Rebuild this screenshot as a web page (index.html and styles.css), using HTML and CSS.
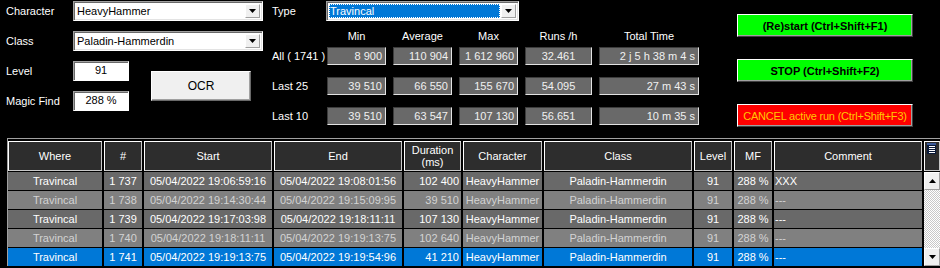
FILE: index.html
```html
<!DOCTYPE html>
<html lang="en">
<head>
  <meta charset="UTF-8" />
  <title>Run Tracker</title>
  <link rel="stylesheet" href="styles.css">
</head>
<body>
  <div class="top">
    <!-- Character setup -->
    <div class="setup">
      <span class="lbl">Character</span>
      <div class="combo wide">
        <span class="combo-text">HeavyHammer</span>
        <span class="combo-btn"><svg width="7" height="4" viewBox="0 0 7 4"><polygon points="0,0 7,0 3.5,4" fill="#000"/></svg></span>
      </div>
      <span class="lbl">Class</span>
      <div class="combo wide">
        <span class="combo-text">Paladin-Hammerdin</span>
        <span class="combo-btn"><svg width="7" height="4" viewBox="0 0 7 4"><polygon points="0,0 7,0 3.5,4" fill="#000"/></svg></span>
      </div>
      <span class="lbl">Level</span>
      <div class="field">91</div>
      <button class="ocr">OCR</button>
      <span class="lbl">Magic Find</span>
      <div class="field">288 %</div>
    </div>

    <!-- Stats -->
    <div class="stats">
      <div class="type-row">
        <span class="lbl type-lbl">Type</span>
        <div class="combo type">
          <span class="combo-text selected">Travincal</span>
          <span class="combo-btn"><svg width="7" height="4" viewBox="0 0 7 4"><polygon points="0,0 7,0 3.5,4" fill="#000"/></svg></span>
        </div>
      </div>
      <div class="stat-head">
        <span></span>
        <span>Min</span>
        <span>Average</span>
        <span>Max</span>
        <span>Runs /h</span>
        <span>Total Time</span>
      </div>
      <div class="stat-row">
        <span class="lbl">All ( 1741 )</span>
        <span class="val">8 900</span>
        <span class="val">110 904</span>
        <span class="val">1 612 960</span>
        <span class="val center">32.461</span>
        <span class="val">2 j 5 h 38 m 4 s</span>
      </div>
      <div class="stat-row">
        <span class="lbl">Last 25</span>
        <span class="val">39 510</span>
        <span class="val">66 550</span>
        <span class="val">155 670</span>
        <span class="val center">54.095</span>
        <span class="val">27 m 43 s</span>
      </div>
      <div class="stat-row">
        <span class="lbl">Last 10</span>
        <span class="val">39 510</span>
        <span class="val">63 547</span>
        <span class="val">107 130</span>
        <span class="val center">56.651</span>
        <span class="val">10 m 35 s</span>
      </div>
    </div>

    <!-- Actions -->
    <div class="actions">
      <button class="act go">(Re)start (Ctrl+Shift+F1)</button>
      <button class="act go">STOP (Ctrl+Shift+F2)</button>
      <button class="act cancel">CANCEL active run (Ctrl+Shift+F3)</button>
    </div>
  </div>

  <!-- Runs grid -->
  <div class="runs">
    <div class="th">Where</div>
    <div class="th">#</div>
    <div class="th">Start</div>
    <div class="th">End</div>
    <div class="th">Duration<br>(ms)</div>
    <div class="th">Character</div>
    <div class="th">Class</div>
    <div class="th">Level</div>
    <div class="th">MF</div>
    <div class="th">Comment</div>
    <div class="th corner">
      <svg width="9" height="11" viewBox="0 0 9 11">
        <rect x="0" y="0" width="9" height="11" fill="#0a1a3a"/>
        <rect x="0" y="0" width="9" height="2" fill="#3a5a9a"/>
        <rect x="2" y="3" width="6" height="1" fill="#fff"/>
        <rect x="2" y="5" width="6" height="1" fill="#fff"/>
        <rect x="2" y="7" width="6" height="1" fill="#fff"/>
        <rect x="2" y="9" width="6" height="1" fill="#fff"/>
      </svg>
    </div>

    <div class="row odd">
      <div class="td">Travincal</div>
      <div class="td">1 737</div>
      <div class="td">05/04/2022 19:06:59:16</div>
      <div class="td">05/04/2022 19:08:01:56</div>
      <div class="td right">102 400</div>
      <div class="td">HeavyHammer</div>
      <div class="td">Paladin-Hammerdin</div>
      <div class="td">91</div>
      <div class="td">288 %</div>
      <div class="td left">XXX</div>
    </div>
    <div class="row even">
      <div class="td">Travincal</div>
      <div class="td">1 738</div>
      <div class="td">05/04/2022 19:14:30:44</div>
      <div class="td">05/04/2022 19:15:09:95</div>
      <div class="td right">39 510</div>
      <div class="td">HeavyHammer</div>
      <div class="td">Paladin-Hammerdin</div>
      <div class="td">91</div>
      <div class="td">288 %</div>
      <div class="td left">---</div>
    </div>
    <div class="row odd">
      <div class="td">Travincal</div>
      <div class="td">1 739</div>
      <div class="td">05/04/2022 19:17:03:98</div>
      <div class="td">05/04/2022 19:18:11:11</div>
      <div class="td right">107 130</div>
      <div class="td">HeavyHammer</div>
      <div class="td">Paladin-Hammerdin</div>
      <div class="td">91</div>
      <div class="td">288 %</div>
      <div class="td left">---</div>
    </div>
    <div class="row even">
      <div class="td">Travincal</div>
      <div class="td">1 740</div>
      <div class="td">05/04/2022 19:18:11:11</div>
      <div class="td">05/04/2022 19:19:13:75</div>
      <div class="td right">102 640</div>
      <div class="td">HeavyHammer</div>
      <div class="td">Paladin-Hammerdin</div>
      <div class="td">91</div>
      <div class="td">288 %</div>
      <div class="td left">---</div>
    </div>
    <div class="row sel">
      <div class="td">Travincal</div>
      <div class="td">1 741</div>
      <div class="td">05/04/2022 19:19:13:75</div>
      <div class="td">05/04/2022 19:19:54:96</div>
      <div class="td right">41 210</div>
      <div class="td">HeavyHammer</div>
      <div class="td">Paladin-Hammerdin</div>
      <div class="td">91</div>
      <div class="td">288 %</div>
      <div class="td left">---</div>
    </div>

    <div class="scroll">
      <span class="sb-btn"><svg width="7" height="4" viewBox="0 0 7 4"><polygon points="0,4 7,4 3.5,0" fill="#000"/></svg></span>
      <span class="sb-track"></span>
      <span class="sb-btn"><svg width="7" height="4" viewBox="0 0 7 4"><polygon points="0,0 7,0 3.5,4" fill="#000"/></svg></span>
    </div>
  </div>
</body>
</html>
```

FILE: styles.css
```css
/* ===============================
   BASE
   =============================== */
* {
  margin: 0;
  padding: 0;
  box-sizing: border-box;
}
body {
  font-family: "Liberation Sans", Arial, sans-serif;
  font-size: 11px;
  background: #000;
  color: #fff;
  width: 940px;
  height: 268px;
  overflow: hidden;
}
button {
  font-family: inherit;
  cursor: pointer;
  padding: 0;
  white-space: nowrap;
}
.lbl {
  white-space: nowrap;
}

.top {
  display: flex;
  height: 138px;
}

/* ===============================
   SETUP (left)
   =============================== */
.setup {
  display: grid;
  grid-template-columns: 67px 56px 22px 100px 12px;
  grid-template-rows: repeat(4, 20px);
  row-gap: 10px;
  align-content: start;
  align-items: center;
  padding: 1px 0 0 6px;
}
.setup .lbl {
  grid-column: 1;
}
.combo {
  display: flex;
  align-items: center;
  height: 20px;
  padding: 2px;
  background: #fff;
  color: #000;
  border: 1px solid;
  border-color: #a0a0a0 #fff #fff #a0a0a0;
  box-shadow: inset 1px 1px #696969, inset -1px -1px #e3e3e3;
}
.combo.wide {
  grid-column: 2 / 6;
}
.combo-text {
  flex: 1;
  height: 14px;
  line-height: 14px;
  padding-left: 1px;
  white-space: nowrap;
}
.combo-text.selected {
  background: #0078d7;
  color: #fff;
  outline: 1px dotted #fff;
  outline-offset: -1px;
}
.combo-btn {
  width: 15px;
  height: 14px;
  margin-left: 1px;
  display: flex;
  align-items: center;
  justify-content: center;
  background: #f0f0f0;
  border: 1px solid;
  border-color: #fff #a0a0a0 #a0a0a0 #fff;
}
.field {
  grid-column: 2;
  height: 20px;
  line-height: 17px;
  text-align: center;
  background: #fff;
  color: #000;
  border: 1px solid;
  border-color: #a0a0a0 #fff #fff #a0a0a0;
  box-shadow: inset 1px 1px #696969;
}
.ocr {
  grid-column: 4;
  grid-row: 3 / 5;
  align-self: center;
  height: 30px;
  font-size: 12px;
  color: #000;
  background: #f0f0f0;
  border: 1px solid;
  border-color: #fff #696969 #696969 #fff;
  box-shadow: inset -1px -1px #a0a0a0;
}

/* ===============================
   STATS (middle)
   =============================== */
.stats {
  margin-left: 9px;
  padding-top: 1px;
}
.type-row {
  display: flex;
  align-items: center;
}
.type-lbl {
  width: 54px;
}
.combo.type {
  width: 193px;
}
.stat-head,
.stat-row {
  display: grid;
  grid-template-columns: 48px 59px 59px 59px 67px 100px;
  column-gap: 7px;
  align-items: center;
}
.stat-head {
  height: 16px;
  margin-top: 7px;
  text-align: center;
}
.stat-row {
  height: 18px;
  margin-top: 12px;
}
.stat-head + .stat-row {
  margin-top: 3px;
}
.val {
  height: 18px;
  line-height: 16px;
  padding-right: 3px;
  text-align: right;
  white-space: nowrap;
  background: #696969;
  color: #f0f0f0;
  border: 1px solid;
  border-color: #3c3c3c #e3e3e3 #e3e3e3 #3c3c3c;
}
.val.center {
  text-align: center;
  padding-right: 0;
}

/* ===============================
   ACTIONS (right)
   =============================== */
.actions {
  display: flex;
  flex-direction: column;
  gap: 22px;
  margin-left: 38px;
  padding-top: 14px;
}
.act {
  width: 176px;
  height: 23px;
  font-size: 11px;
  font-weight: bold;
  border: 1px solid;
  border-color: #fff #404040 #404040 #fff;
  box-shadow: inset -1px -1px #a0a0a0;
}
.act.go {
  background: #00ff00;
  color: #000;
}
.act.cancel {
  background: #ff0000;
  color: #ffc800;
  font-weight: normal;
  letter-spacing: -0.2px;
}

/* ===============================
   RUNS GRID
   =============================== */
.runs {
  display: grid;
  grid-template-columns: 94px 38px 128px 128px 57px 79px 148px 38px 38px 148px 16px;
  grid-template-rows: 30px repeat(5, 18px);
  column-gap: 2px;
  row-gap: 1px;
  margin-left: 7px;
  padding-top: 2px;
  border-top: 1px solid #a0a0a0;
  border-left: 1px solid #a0a0a0;
  background: #000;
}
.th {
  display: flex;
  align-items: center;
  justify-content: center;
  text-align: center;
  line-height: 12px;
  background: #2d2d2d;
  color: #fff;
  border: 1px solid;
  border-color: #fff #c8c8c8 #c8c8c8 #fff;
}
.th.corner {
  align-items: flex-start;
  justify-content: flex-start;
  padding: 1px 0 0 2px;
}
.row {
  display: contents;
}
.td {
  display: flex;
  align-items: center;
  justify-content: center;
  padding: 0 2px;
  white-space: nowrap;
  overflow: hidden;
}
.td.right {
  justify-content: flex-end;
}
.td.left {
  justify-content: flex-start;
  padding-left: 1px;
}
.odd .td {
  background: #696969;
  color: #fff;
}
.even .td {
  background: #808080;
  color: #d3d3d3;
}
.sel .td {
  background: #0078d7;
  color: #fff;
}

.scroll {
  grid-column: 11;
  grid-row: 2 / 7;
  display: flex;
  flex-direction: column;
  background: repeating-conic-gradient(#fff 0 25%, #c8c8c8 0 50%) 0 0 / 2px 2px;
}
.sb-btn {
  height: 18px;
  display: flex;
  align-items: center;
  justify-content: center;
  background: #f0f0f0;
  border: 1px solid;
  border-color: #fff #a0a0a0 #a0a0a0 #fff;
}
.sb-track {
  flex: 1;
}
```
